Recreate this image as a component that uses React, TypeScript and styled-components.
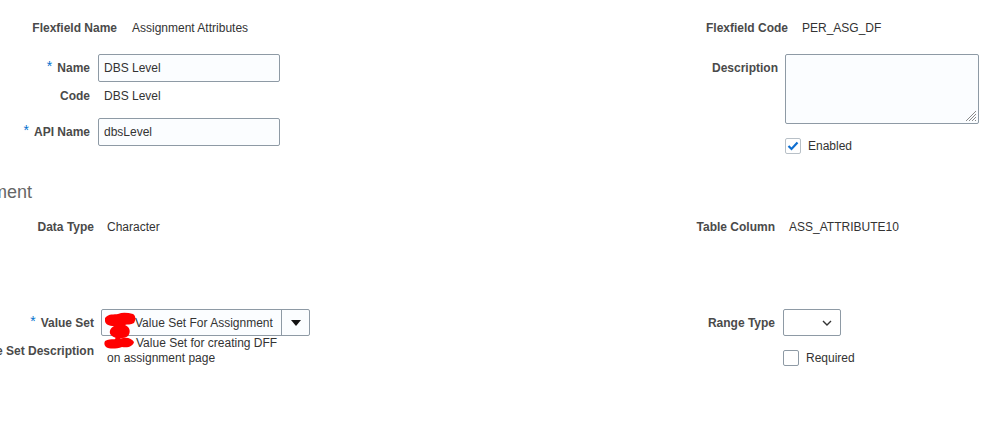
import React from "react";
import styled, { createGlobalStyle } from "styled-components";

const GlobalStyle = createGlobalStyle`
  body {
    margin: 0;
    background: #ffffff;
    font-family: "Liberation Sans", Arial, sans-serif;
    font-size: 12px;
    color: #333333;
    overflow: hidden;
  }
`;

const Page = styled.div`
  width: 984px;
  height: 438px;
  padding-top: 14px;
  box-sizing: border-box;
`;

const Section = styled.div<{ $mt?: number }>`
  display: grid;
  grid-template-columns: 660px 1fr;
  margin-top: ${(p) => p.$mt ?? 0}px;
`;

const Column = styled.div`
  display: flex;
  flex-direction: column;
`;

const Row = styled.div<{ $label: number; $gap: number; $mt?: number; $h?: number }>`
  display: grid;
  grid-template-columns: ${(p) => p.$label}px auto;
  column-gap: ${(p) => p.$gap}px;
  align-items: center;
  min-height: ${(p) => p.$h ?? 28}px;
  margin-top: ${(p) => p.$mt ?? 0}px;
`;

const Label = styled.div<{ $top?: boolean }>`
  display: flex;
  justify-content: flex-end;
  align-self: ${(p) => (p.$top ? "start" : "center")};
  padding-top: ${(p) => (p.$top ? 7 : 0)}px;
  white-space: nowrap;
  font-weight: bold;
  color: #4a4a4a;
  line-height: 14px;
`;

const Required = styled.span`
  color: #0572ce;
  font-weight: normal;
  font-size: 14px;
  line-height: 10px;
  margin-right: 5px;
  align-self: flex-start;
`;

const Value = styled.div<{ $pad?: number }>`
  padding-left: ${(p) => p.$pad ?? 0}px;
  color: #333333;
  line-height: 15px;
  white-space: nowrap;
`;

const TextInput = styled.input`
  width: 182px;
  height: 28px;
  box-sizing: border-box;
  border: 1px solid #8e9aa5;
  border-radius: 2px;
  background: #fbfdff;
  padding: 0 5px;
  font-family: inherit;
  font-size: 12px;
  color: #333333;
  outline: none;
`;

const AreaWrap = styled.div`
  position: relative;
  width: 194px;
  height: 70px;
`;

const TextArea = styled.textarea`
  width: 100%;
  height: 100%;
  box-sizing: border-box;
  border: 1px solid #8e9aa5;
  border-radius: 2px;
  background: #fbfdff;
  font-family: inherit;
  font-size: 12px;
  resize: none;
  outline: none;
  display: block;
`;

const Grip = styled.svg`
  position: absolute;
  right: 2px;
  bottom: 2px;
  pointer-events: none;
`;

const CheckRow = styled.label`
  display: flex;
  align-items: center;
  gap: 7px;
  color: #333333;
`;

const Box = styled.span<{ $light?: boolean }>`
  width: 16px;
  height: 16px;
  box-sizing: border-box;
  border: 1px solid ${(p) => (p.$light ? "#b8c0c7" : "#8e9aa5")};
  border-radius: 2px;
  background: #ffffff;
  display: flex;
  align-items: center;
  justify-content: center;
`;

const Heading = styled.h2`
  margin: 21px 0 0 -62px;
  font-size: 18px;
  font-weight: normal;
  line-height: 22px;
  color: #666666;
  white-space: nowrap;
`;

const Combo = styled.div`
  position: relative;
  width: 209px;
  height: 27px;
  box-sizing: border-box;
  border: 1px solid #8e9aa5;
  border-radius: 2px;
  background: #fbfdff;
  display: flex;
`;

const ComboText = styled.div`
  flex: 1;
  display: flex;
  align-items: center;
  padding-left: 33px;
  color: #333333;
  white-space: nowrap;
`;

const ComboButton = styled.div`
  width: 27px;
  border-left: 1px solid #8e9aa5;
  display: flex;
  align-items: center;
  justify-content: center;
`;

const Triangle = styled.span`
  width: 0;
  height: 0;
  border-left: 5px solid transparent;
  border-right: 5px solid transparent;
  border-top: 6px solid #111111;
`;

const Scribble = styled.svg`
  position: absolute;
  left: 1px;
  top: 2px;
  overflow: visible;
  pointer-events: none;
  z-index: 2;
`;

const Select = styled.div`
  width: 58px;
  height: 27px;
  box-sizing: border-box;
  border: 1px solid #8e9aa5;
  border-radius: 2px;
  background: #ffffff;
  display: flex;
  align-items: center;
  justify-content: flex-end;
  padding-right: 8px;
`;

const Spacer = styled.span`
  display: inline-block;
  width: 29px;
`;

export default function App() {
  return (
    <Page>
      <GlobalStyle />
      <Section>
        <Column>
          <Row $label={117} $gap={15}>
            <Label>Flexfield Name</Label>
            <Value>Assignment Attributes</Value>
          </Row>
          <Row $label={90} $gap={8} $mt={12}>
            <Label>
              <Required>*</Required>Name
            </Label>
            <TextInput defaultValue="DBS Level" />
          </Row>
          <Row $label={90} $gap={8}>
            <Label>Code</Label>
            <Value $pad={6}>DBS Level</Value>
          </Row>
          <Row $label={90} $gap={8} $mt={8}>
            <Label>
              <Required>*</Required>API Name
            </Label>
            <TextInput defaultValue="dbsLevel" />
          </Row>
        </Column>
        <Column>
          <Row $label={128} $gap={14}>
            <Label>Flexfield Code</Label>
            <Value>PER_ASG_DF</Value>
          </Row>
          <Row $label={118} $gap={7} $mt={12}>
            <Label $top>Description</Label>
            <AreaWrap>
              <TextArea />
              <Grip width="12" height="12" viewBox="0 0 12 12">
                <g stroke="#8a8a8a" strokeWidth="1">
                  <line x1="11" y1="1" x2="1" y2="11" />
                  <line x1="11" y1="4" x2="4" y2="11" />
                  <line x1="11" y1="7" x2="7" y2="11" />
                  <line x1="11" y1="10" x2="10" y2="11" />
                </g>
              </Grip>
            </AreaWrap>
          </Row>
          <Row $label={118} $gap={7} $mt={8}>
            <span />
            <CheckRow>
              <Box $light>
                <svg width="12" height="10" viewBox="0 0 12 10">
                  <polyline
                    points="1.5,5 4.5,8 10.5,1.5"
                    fill="none"
                    stroke="#0f6fd1"
                    strokeWidth="2.2"
                  />
                </svg>
              </Box>
              Enabled
            </CheckRow>
          </Row>
        </Column>
      </Section>

      <Heading>Assignment</Heading>

      <Section $mt={10}>
        <Column>
          <Row $label={94} $gap={7}>
            <Label>Data Type</Label>
            <Value $pad={6}>Character</Value>
          </Row>
          <Row $label={94} $gap={7} $mt={68} $h={27}>
            <Label>
              <Required>*</Required>Value Set
            </Label>
            <Combo>
              <Scribble width="34" height="40" viewBox="0 0 34 40">
                <g fill="#ff0000">
                  <path d="M2 6 C6 1 11 3 15 2 C20 0 25 1 30 2 C33 4 33 8 31 11 C28 13 24 12 22 13 C27 15 28 20 25 24 C21 27 13 27 9 24 C5 21 7 16 11 14 C6 14 2 12 2 9 Z" />
                  <path d="M2 29 C8 26 14 28 20 26 C25 25 29 27 31 30 C30 34 26 36 19 35 C13 37 6 37 3 35 C1 33 1 31 2 29 Z" />
                  <path d="M13 23 C18 24 19 27 15 29 L12 28 Z" />
                </g>
              </Scribble>
              <ComboText>Value Set For Assignment</ComboText>
              <ComboButton>
                <Triangle />
              </ComboButton>
            </Combo>
          </Row>
          <Row $label={94} $gap={7} $h={30}>
            <Label>Value Set Description</Label>
            <Value $pad={6}>
              <Spacer />
              Value Set for creating DFF
              <br />
              on assignment page
            </Value>
          </Row>
        </Column>
        <Column>
          <Row $label={115} $gap={8}>
            <Label>Table Column</Label>
            <Value $pad={6}>ASS_ATTRIBUTE10</Value>
          </Row>
          <Row $label={115} $gap={8} $mt={68} $h={27}>
            <Label>Range Type</Label>
            <Select>
              <svg width="10" height="6" viewBox="0 0 10 6">
                <polyline points="1,1 5,5 9,1" fill="none" stroke="#333333" strokeWidth="1.4" />
              </svg>
            </Select>
          </Row>
          <Row $label={115} $gap={8} $mt={8}>
            <span />
            <CheckRow>
              <Box />
              Required
            </CheckRow>
          </Row>
        </Column>
      </Section>
    </Page>
  );
}
